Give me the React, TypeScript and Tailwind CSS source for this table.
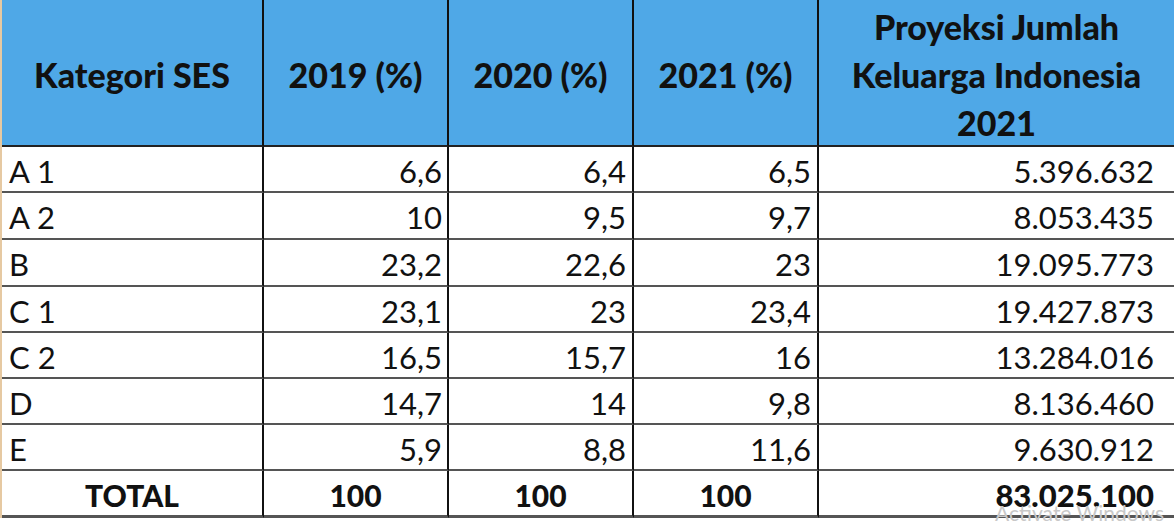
const rows: [string, string, string, string, string][] = [
  ["A 1", "6,6", "6,4", "6,5", "5.396.632"],
  ["A 2", "10", "9,5", "9,7", "8.053.435"],
  ["B", "23,2", "22,6", "23", "19.095.773"],
  ["C 1", "23,1", "23", "23,4", "19.427.873"],
  ["C 2", "16,5", "15,7", "16", "13.284.016"],
  ["D", "14,7", "14", "9,8", "8.136.460"],
  ["E", "5,9", "8,8", "11,6", "9.630.912"],
];

const heights = ["h-[46px]", "h-[47px]", "h-[47px]", "h-[46px]", "h-[46px]", "h-[46px]", "h-[46px]"];

export default function App() {
  return (
    <div className="relative h-[522px] w-[1174px] overflow-hidden bg-white font-['Lato',sans-serif] text-[#111]">
      <div className="grid w-[1174px] grid-cols-[262px_185px_185px_185px_357px] border-l-2 border-l-[#e6c9a2]">
        {/* header */}
        <HeadCell>Kategori SES</HeadCell>
        <HeadCell>2019 (%)</HeadCell>
        <HeadCell>2020 (%)</HeadCell>
        <HeadCell>2021 (%)</HeadCell>
        <HeadCell>
          Proyeksi Jumlah
          <br />
          Keluarga Indonesia
          <br />
          2021
        </HeadCell>

        {rows.map((r, i) => (
          <Row key={r[0]} r={r} h={heights[i]} />
        ))}

        {/* total */}
        <div className="flex h-[47px] items-center justify-center border-r-2 border-b-[3px] border-r-[#111] border-b-[#555] pt-1 text-[30px] font-black">
          TOTAL
        </div>
        <div className="flex h-[47px] items-center justify-center border-r-2 border-b-[3px] border-r-[#111] border-b-[#555] pt-1 text-[30px] font-black">
          100
        </div>
        <div className="flex h-[47px] items-center justify-center border-r-2 border-b-[3px] border-r-[#111] border-b-[#555] pt-1 text-[30px] font-black">
          100
        </div>
        <div className="flex h-[47px] items-center justify-center border-r-2 border-b-[3px] border-r-[#111] border-b-[#555] pt-1 text-[30px] font-black">
          100
        </div>
        <div className="flex h-[47px] items-center justify-end border-r-2 border-b-[3px] border-r-[#555] border-b-[#555] pr-[20px] pt-1 text-[31px] font-black">
          83.025.100
        </div>
      </div>

      <div className="pointer-events-none absolute right-[10px] top-[502px] text-[21px] leading-none text-[#c8c8c8]">
        Activate Windows
      </div>
    </div>
  );
}

function HeadCell({ children }: { children: React.ReactNode }) {
  return (
    <div className="flex h-[147px] items-center justify-center border-r-2 border-b-2 border-r-[#111] border-b-[#222] bg-[#4fa8e7] pt-1 text-center text-[34px] font-black leading-[48px]">
      <div>{children}</div>
    </div>
  );
}

function Row({ r, h }: { r: [string, string, string, string, string]; h: string }) {
  return (
    <>
      <div className={`${h} flex items-center border-r-2 border-b-2 border-r-[#111] border-b-[#555] pl-[7px] pt-1 text-[31px]`}>
        {r[0]}
      </div>
      <div className={`${h} flex items-center justify-end border-r-2 border-b-2 border-r-[#111] border-b-[#555] pr-[5px] pt-1 text-[31px]`}>
        {r[1]}
      </div>
      <div className={`${h} flex items-center justify-end border-r-2 border-b-2 border-r-[#111] border-b-[#555] pr-[6px] pt-1 text-[31px]`}>
        {r[2]}
      </div>
      <div className={`${h} flex items-center justify-end border-r-2 border-b-2 border-r-[#111] border-b-[#555] pr-[6px] pt-1 text-[31px]`}>
        {r[3]}
      </div>
      <div className={`${h} flex items-center justify-end border-r-2 border-b-2 border-r-[#555] border-b-[#555] pr-[20px] pt-1 text-[31px]`}>
        {r[4]}
      </div>
    </>
  );
}
